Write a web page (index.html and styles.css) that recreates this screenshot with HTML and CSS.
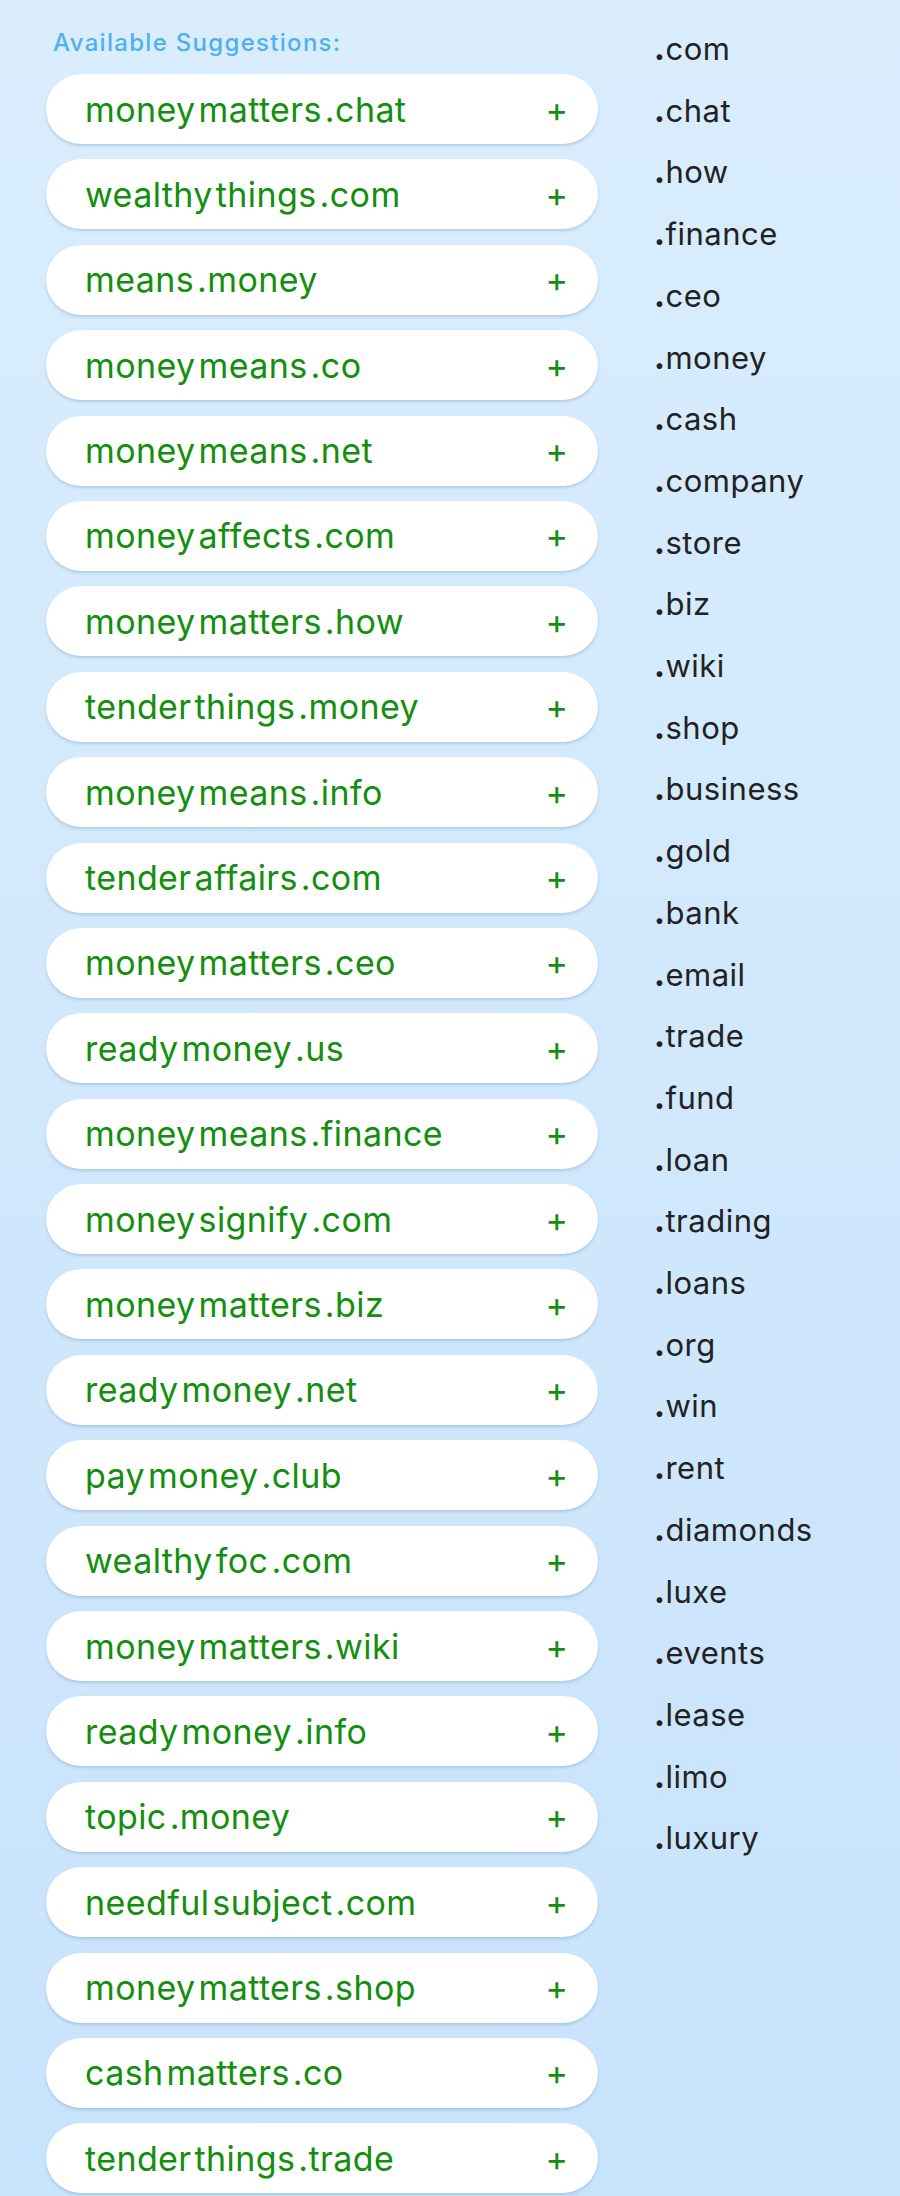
FILE: index.html
```html
<!DOCTYPE html>
<html>
<head>
<meta charset="utf-8">
<link rel="stylesheet" href="styles.css">
</head>
<body>
<div class="page">
  <div class="left">
    <div class="title">Available Suggestions:</div>
    <ul class="pills">
      <li class="pill"><span class="name"><span>money</span><span>matters</span><span>.chat</span></span><span class="plus">+</span></li>
      <li class="pill"><span class="name"><span>wealthy</span><span>things</span><span>.com</span></span><span class="plus">+</span></li>
      <li class="pill"><span class="name"><span>means</span><span>.money</span></span><span class="plus">+</span></li>
      <li class="pill"><span class="name"><span>money</span><span>means</span><span>.co</span></span><span class="plus">+</span></li>
      <li class="pill"><span class="name"><span>money</span><span>means</span><span>.net</span></span><span class="plus">+</span></li>
      <li class="pill"><span class="name"><span>money</span><span>affects</span><span>.com</span></span><span class="plus">+</span></li>
      <li class="pill"><span class="name"><span>money</span><span>matters</span><span>.how</span></span><span class="plus">+</span></li>
      <li class="pill"><span class="name"><span>tender</span><span>things</span><span>.money</span></span><span class="plus">+</span></li>
      <li class="pill"><span class="name"><span>money</span><span>means</span><span>.info</span></span><span class="plus">+</span></li>
      <li class="pill"><span class="name"><span>tender</span><span>affairs</span><span>.com</span></span><span class="plus">+</span></li>
      <li class="pill"><span class="name"><span>money</span><span>matters</span><span>.ceo</span></span><span class="plus">+</span></li>
      <li class="pill"><span class="name"><span>ready</span><span>money</span><span>.us</span></span><span class="plus">+</span></li>
      <li class="pill"><span class="name"><span>money</span><span>means</span><span>.finance</span></span><span class="plus">+</span></li>
      <li class="pill"><span class="name"><span>money</span><span>signify</span><span>.com</span></span><span class="plus">+</span></li>
      <li class="pill"><span class="name"><span>money</span><span>matters</span><span>.biz</span></span><span class="plus">+</span></li>
      <li class="pill"><span class="name"><span>ready</span><span>money</span><span>.net</span></span><span class="plus">+</span></li>
      <li class="pill"><span class="name"><span>pay</span><span>money</span><span>.club</span></span><span class="plus">+</span></li>
      <li class="pill"><span class="name"><span>wealthy</span><span>foc</span><span>.com</span></span><span class="plus">+</span></li>
      <li class="pill"><span class="name"><span>money</span><span>matters</span><span>.wiki</span></span><span class="plus">+</span></li>
      <li class="pill"><span class="name"><span>ready</span><span>money</span><span>.info</span></span><span class="plus">+</span></li>
      <li class="pill"><span class="name"><span>topic</span><span>.money</span></span><span class="plus">+</span></li>
      <li class="pill"><span class="name"><span>needful</span><span>subject</span><span>.com</span></span><span class="plus">+</span></li>
      <li class="pill"><span class="name"><span>money</span><span>matters</span><span>.shop</span></span><span class="plus">+</span></li>
      <li class="pill"><span class="name"><span>cash</span><span>matters</span><span>.co</span></span><span class="plus">+</span></li>
      <li class="pill"><span class="name"><span>tender</span><span>things</span><span>.trade</span></span><span class="plus">+</span></li>
    </ul>
  </div>
  <ul class="tlds">
    <li><b>.</b>com</li>
    <li><b>.</b>chat</li>
    <li><b>.</b>how</li>
    <li><b>.</b>finance</li>
    <li><b>.</b>ceo</li>
    <li><b>.</b>money</li>
    <li><b>.</b>cash</li>
    <li><b>.</b>company</li>
    <li><b>.</b>store</li>
    <li><b>.</b>biz</li>
    <li><b>.</b>wiki</li>
    <li><b>.</b>shop</li>
    <li><b>.</b>business</li>
    <li><b>.</b>gold</li>
    <li><b>.</b>bank</li>
    <li><b>.</b>email</li>
    <li><b>.</b>trade</li>
    <li><b>.</b>fund</li>
    <li><b>.</b>loan</li>
    <li><b>.</b>trading</li>
    <li><b>.</b>loans</li>
    <li><b>.</b>org</li>
    <li><b>.</b>win</li>
    <li><b>.</b>rent</li>
    <li><b>.</b>diamonds</li>
    <li><b>.</b>luxe</li>
    <li><b>.</b>events</li>
    <li><b>.</b>lease</li>
    <li><b>.</b>limo</li>
    <li><b>.</b>luxury</li>
  </ul>
</div>
</body>
</html>
```
FILE: styles.css
```css
html, body {
  margin: 0;
  padding: 0;
}
body {
  width: 900px;
  height: 2196px;
  overflow: hidden;
  background: linear-gradient(180deg, #d9edfd 0%, #c8e3fc 100%);
  font-family: Inter, "Noto Sans", sans-serif;
}
.page {
  display: flex;
  align-items: flex-start;
}
.left {
  width: 552px;
  margin-left: 46px;
  padding-top: 28px;
}
.title {
  margin-left: 7px;
  font-size: 24px;
  line-height: 30px;
  font-weight: 500;
  letter-spacing: 1.3px;
  color: #4eb1ee;
}
.pills {
  list-style: none;
  margin: 16px 0 0 0;
  padding: 0;
}
.pill {
  height: 70px;
  margin-bottom: 15.4px;
  background: #fff;
  border-radius: 35px;
  box-shadow: 0 2px 3px rgba(60, 100, 140, 0.22);
  display: flex;
  align-items: center;
  justify-content: space-between;
  padding: 0 30px 0 39px;
  box-sizing: border-box;
  color: #148e0e;
}
.name {
  display: flex;
  gap: 3px;
  font-size: 34px;
  letter-spacing: 0.4px;
}
.plus {
  font-size: 34px;
  font-weight: 400;
}
.tlds {
  list-style: none;
  margin: 18px 0 0 56px;
  padding: 0;
  color: #222;
  font-size: 31px;
  letter-spacing: 0.5px;
  line-height: 61.7px;
}
.tlds b {
  font-weight: 800;
}
```
